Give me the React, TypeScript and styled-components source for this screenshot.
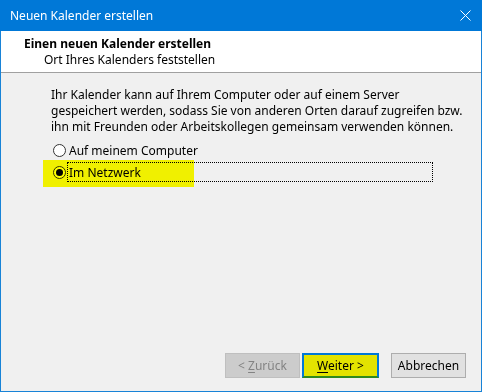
import React from "react";
import styled, { createGlobalStyle } from "styled-components";

const GlobalStyle = createGlobalStyle`
  html, body {
    margin: 0;
    padding: 0;
    background: #fff;
  }
  body {
    font-family: "Noto Sans", "Liberation Sans", sans-serif;
    font-size: 12px;
    color: #000;
  }
`;

const Window = styled.div`
  width: 482px;
  height: 392px;
  box-sizing: border-box;
  display: flex;
  flex-direction: column;
  background: #f0f0f0;
  border: 1px solid #1883d7;
  border-top: none;
`;

const TitleBar = styled.div`
  height: 31px;
  margin: 0 -1px;
  display: flex;
  align-items: center;
  justify-content: space-between;
  padding: 0 10px 0 10px;
  background: #0078d7;
  color: #fff;
  font-size: 12px;
`;

const CloseButton = styled.span`
  display: flex;
  width: 11px;
  height: 11px;
  margin-right: 1px;
`;

const Header = styled.div`
  height: 42px;
  box-sizing: border-box;
  padding: 5px 0 0 23px;
  background: #fff;
  border-bottom: 1px solid #a0a0a0;
  line-height: 16px;
`;

const HeaderTitle = styled.div`
  font-weight: bold;
`;

const HeaderSub = styled.div`
  padding-left: 20px;
`;

const Body = styled.div`
  position: relative;
  flex: 1;
  padding: 14px 0 0 50px;
`;

const Intro = styled.p`
  margin: 0 0 4px;
  line-height: 16px;
  white-space: pre-line;
`;

const RadioRow = styled.label`
  display: flex;
  align-items: center;
  height: 22px;
  margin-left: 2px;
`;

const RadioCircle = styled.span<{ $checked?: boolean }>`
  width: 13px;
  height: 13px;
  box-sizing: border-box;
  border-radius: 50%;
  border: 1px solid #333;
  background: #fff;
  display: flex;
  align-items: center;
  justify-content: center;
  &::after {
    content: "";
    width: 7px;
    height: 7px;
    border-radius: 50%;
    background: ${(p) => (p.$checked ? "#000" : "transparent")};
  }
`;

const RadioLabel = styled.span<{ $focused?: boolean }>`
  margin-left: 1px;
  height: 20px;
  box-sizing: border-box;
  display: flex;
  align-items: center;
  padding-left: 2px;
  width: ${(p) => (p.$focused ? "366px" : "auto")};
  outline: ${(p) => (p.$focused ? "1px dotted #000" : "none")};
  outline-offset: -1px;
`;

const Highlight = styled.div`
  position: absolute;
  left: 42px;
  top: 87px;
  width: 151px;
  height: 27px;
  background: #ffff00;
  mix-blend-mode: multiply;
  pointer-events: none;
`;

const Footer = styled.div`
  display: flex;
  justify-content: flex-end;
  align-items: center;
  padding: 0 15px 13px 0;
`;

const Button = styled.button<{ $variant?: "disabled" | "default" | "normal" }>`
  height: 25px;
  width: 75px;
  box-sizing: border-box;
  font-family: inherit;
  font-size: 12px;
  padding: 0;
  border: 1px solid
    ${(p) => (p.$variant === "disabled" ? "#bfbfbf" : p.$variant === "default" ? "#0078d7" : "#adadad")};
  background: ${(p) => (p.$variant === "disabled" ? "#cccccc" : p.$variant === "default" ? "#e3e300" : "#e1e1e1")};
  color: ${(p) => (p.$variant === "disabled" ? "#838383" : "#000")};
  ${(p) =>
    p.$variant === "default" &&
    `
    width: 77px;
    border-width: 2px;
    border-bottom-color: #2f8a1e;
    margin-left: 2px;
    margin-right: 12px;
  `}

  u {
    text-decoration: underline;
    text-underline-offset: 2px;
  }
`;

export default function App() {
  return (
    <>
      <GlobalStyle />
      <Window>
        <TitleBar>
          <span>Neuen Kalender erstellen</span>
          <CloseButton>
            <svg width="11" height="11" viewBox="0 0 11 11">
              <path d="M0.5 0.5 L10.5 10.5 M10.5 0.5 L0.5 10.5" stroke="#fff" strokeWidth="1" />
            </svg>
          </CloseButton>
        </TitleBar>
        <Header>
          <HeaderTitle>Einen neuen Kalender erstellen</HeaderTitle>
          <HeaderSub>Ort Ihres Kalenders feststellen</HeaderSub>
        </Header>
        <Body>
          <Intro>
            {"Ihr Kalender kann auf Ihrem Computer oder auf einem Server\ngespeichert werden, sodass Sie von anderen Orten darauf zugreifen bzw.\nihn mit Freunden oder Arbeitskollegen gemeinsam verwenden können."}
          </Intro>
          <RadioRow>
            <RadioCircle />
            <RadioLabel>Auf meinem Computer</RadioLabel>
          </RadioRow>
          <RadioRow>
            <RadioCircle $checked />
            <RadioLabel $focused>Im Netzwerk</RadioLabel>
          </RadioRow>
          <Highlight />
        </Body>
        <Footer>
          <Button $variant="disabled">
            &lt; <u>Z</u>urück
          </Button>
          <Button $variant="default">
            <u>W</u>eiter &gt;
          </Button>
          <Button>Abbrechen</Button>
        </Footer>
      </Window>
    </>
  );
}
